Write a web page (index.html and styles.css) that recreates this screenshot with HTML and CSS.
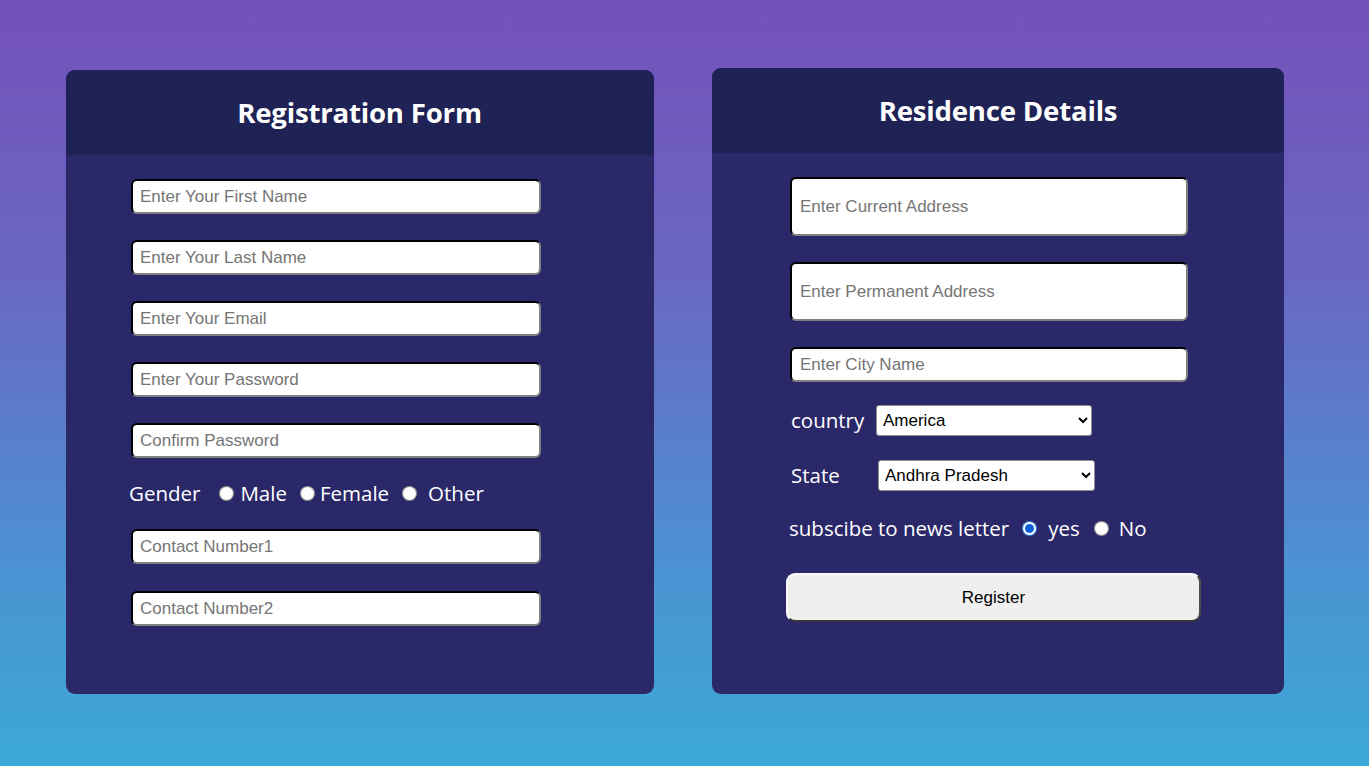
FILE: index.html
```html
<!DOCTYPE html>
<html lang="en">
<head>
<meta charset="utf-8">
<title>Registration</title>
<link rel="stylesheet" href="styles.css">
</head>
<body>
<main class="page">
  <section class="card card-left">
    <header class="card-head"><h2>Registration Form</h2></header>
    <div class="card-body body-left">
      <input class="field" type="text" placeholder="Enter Your First Name">
      <input class="field" type="text" placeholder="Enter Your Last Name">
      <input class="field" type="email" placeholder="Enter Your Email">
      <input class="field" type="password" placeholder="Enter Your Password">
      <input class="field" type="password" placeholder="Confirm Password">
      <div class="radio-row gender-row">
        <span class="lbl gender-lbl">Gender</span>
        <input class="radio" type="radio" name="g" id="gm"><label class="lbl opt" for="gm">Male</label>
        <input class="radio" type="radio" name="g" id="gf"><label class="lbl opt opt-female" for="gf">Female</label>
        <input class="radio" type="radio" name="g" id="go"><label class="lbl opt opt-other" for="go">Other</label>
      </div>
      <input class="field" type="text" placeholder="Contact Number1">
      <input class="field field-last" type="text" placeholder="Contact Number2">
    </div>
  </section>

  <section class="card card-right">
    <header class="card-head"><h2>Residence Details</h2></header>
    <div class="card-body body-right">
      <input class="field field-tall" type="text" placeholder="Enter Current Address">
      <input class="field field-tall" type="text" placeholder="Enter Permanent Address">
      <input class="field field-wide" type="text" placeholder="Enter City Name">
      <div class="select-row row-country">
        <span class="lbl sel-lbl lbl-country">country</span>
        <select class="sel sel-country"><option>America</option><option>India</option></select>
      </div>
      <div class="select-row row-state">
        <span class="lbl sel-lbl lbl-state">State</span>
        <select class="sel sel-state"><option>Andhra Pradesh</option><option>Kerala</option></select>
      </div>
      <div class="radio-row sub-row">
        <span class="lbl sub-lbl">subscibe to news letter</span>
        <input class="radio" type="radio" name="s" id="sy" checked><label class="lbl opt opt-yes" for="sy">yes</label>
        <input class="radio" type="radio" name="s" id="sn"><label class="lbl opt opt-no" for="sn">No</label>
      </div>
      <button class="btn" type="button">Register</button>
    </div>
  </section>
</main>
</body>
</html>
```

FILE: styles.css
```css
* { box-sizing: border-box; }

html, body {
  margin: 0;
  height: 766px;
}

body {
  background: linear-gradient(180deg, #7451b9 0%, #6a66c2 35%, #4b93d2 75%, #3ba8d6 100%);
  font-family: "Open Sans", "Noto Sans", sans-serif;
  overflow: hidden;
}

.page {
  display: flex;
  align-items: flex-start;
  gap: 58px;
  padding: 68px 0 0 66px;
}

.card {
  background: #2a2869;
  border-radius: 9px;
  overflow: hidden;
  display: flex;
  flex-direction: column;
}

.card-left { width: 588px; height: 624px; margin-top: 2px; }
.card-right { width: 572px; height: 626px; }

.card-head {
  height: 85px;
  background: #1f2255;
  display: flex;
  align-items: center;
  justify-content: center;
}

.card-head h2 {
  margin: 0;
  color: #fff;
  font-size: 27.6px;
  font-weight: 700;
  letter-spacing: -0.2px;
}

.card-left .card-head h2 { margin-top: -1px; margin-left: -1px; }
.card-right .card-head h2 { margin-top: -2px; }

.card-body {
  display: flex;
  flex-direction: column;
  align-items: flex-start;
}

.body-left { padding: 24px 0 0 65px; gap: 26px; }
.body-right { padding: 24px 0 0 78px; }

.field {
  width: 410px;
  height: 35px;
  border: 2px inset #767676;
  border-top-color: #1a1a1a;
  border-left-color: #1a1a1a;
  border-bottom-color: #808080;
  border-right-color: #808080;
  border-radius: 6px;
  background: #fff;
  padding: 0 7px;
  font-family: "Liberation Sans", Arial, sans-serif;
  font-size: 17px;
  color: #000;
  outline: none;
}

.field::placeholder { color: #757575; }

.field-last { margin-top: 1px; }

.field-tall { width: 398px; height: 59px; margin-bottom: 26px; padding-left: 8px; }
.field-wide { width: 398px; height: 35px; padding-left: 8px; }

.lbl {
  color: #fff;
  font-size: 20.5px;
  line-height: 19px;
}

.radio-row {
  display: flex;
  align-items: center;
  height: 19px;
}

.radio {
  width: 15px;
  height: 15px;
  margin: 0;
  accent-color: #0b61d8;
}

.gender-row { margin-left: -2px; }
.gender-lbl { margin-right: 19px; }
.gender-row .opt { margin-left: 6px; margin-right: 13px; }
.gender-row .opt-female { margin-left: 5px; }
.gender-row .opt-other { margin-left: 11px; }

.select-row {
  display: flex;
  align-items: center;
}

.row-country { margin-top: 23px; margin-left: 1px; }
.row-state { margin-top: 24px; margin-left: 1px; }

.lbl-country { width: 85px; }
.lbl-state { width: 87px; }

.sel {
  height: 31px;
  border: 1px solid #8f8f8f;
  border-radius: 3px;
  background: #fff;
  font-family: "Liberation Sans", Arial, sans-serif;
  font-size: 17px;
  color: #000;
  padding: 0 2px;
}

.sel-country { width: 216px; }
.sel-state { width: 217px; }

.sub-row { margin-top: 28px; margin-left: -1px; }
.sub-lbl { margin-right: 13px; }
.sub-row .opt-yes { margin-left: 11px; margin-right: 14px; }
.sub-row .opt-no { margin-left: 10px; }

.btn {
  margin-top: 35px;
  margin-left: -4px;
  width: 415px;
  height: 49px;
  background: #efefef;
  border: 2px outset #d0d0d0;
  border-top-color: #fafafa;
  border-left-color: #fafafa;
  border-bottom-color: #8a8a8a;
  border-right-color: #a0a0a0;
  border-radius: 9px;
  font-family: "Liberation Sans", Arial, sans-serif;
  font-size: 17px;
  color: #000;
}
```
